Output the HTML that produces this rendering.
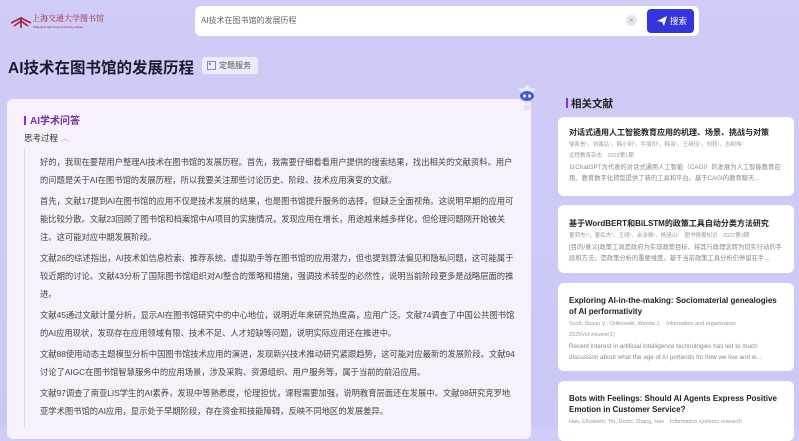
<!DOCTYPE html>
<html><head><meta charset="utf-8">
<style>
*{margin:0;padding:0;box-sizing:border-box}
body{width:799px;height:427px;overflow:hidden;background:linear-gradient(180deg,#cfcdf7 0%,#c9c7f5 100%);font-family:"Liberation Sans","Noto Sans CJK SC",sans-serif;position:relative;color:#333}
.abs{position:absolute}
.search{left:195px;top:6px;width:504px;height:30px;background:#fff;border-radius:6px}
.search .q{position:absolute;left:6px;top:9px;font-size:8px;color:#666}
.search .x{position:absolute;left:431px;top:9px;width:11px;height:11px;border-radius:50%;background:#e6e6ee;color:#999;font-size:8px;line-height:11px;text-align:center}
.btn{left:647px;top:9px;width:47px;height:24px;background:#3535e0;border-radius:4px;color:#fff;font-size:8.5px;line-height:24px;padding-left:23px}
h1{left:8px;top:56px;font-size:15.5px;font-weight:bold;color:#1a1a2e;white-space:nowrap}
.tag{left:202px;top:57px;width:56px;height:17px;background:#ececfc;border-radius:3px;font-size:8px;color:#555;line-height:17px;padding-left:17px}
.panel{left:7px;top:99px;width:524px;height:340px;background:#f8f1fb;border-radius:6px}
.pt{left:24px;top:112px;font-size:10px;font-weight:bold;color:#7030a0}
.pt:before{content:"";display:inline-block;width:2px;height:9px;background:#8a2be2;margin-right:4px;vertical-align:-1px}
.think{left:24px;top:132px;font-size:8.5px;color:#333}
.vl{left:24px;top:148px;width:1px;height:280px;background:#ddd}
.txt{left:40px;top:153px;width:476px;font-size:8.3px;line-height:18px;color:#444}
.txt p{margin-bottom:3px}
.rt{left:566px;top:96px;font-size:10.5px;font-weight:bold;color:#222}
.rt:before{content:"";display:inline-block;width:2px;height:10px;background:#8a2be2;margin-right:3px;vertical-align:-1px}
.card{left:558px;width:236px;background:#fff;border-radius:6px;padding:10px 11px}
.card .t{font-size:8px;font-weight:bold;color:#222;line-height:11px}
.card .m{font-size:5.5px;color:#999;line-height:11px;margin-top:2px;white-space:nowrap;overflow:hidden}
.card .a{font-size:6.3px;color:#888;line-height:11px}
</style></head><body>
<div class="abs" style="left:10px;top:13px;width:110px;height:20px">
<svg width="22" height="14" viewBox="0 0 22 14" style="position:absolute;left:0;top:2px"><path d="M1 8 L11 3 L21 8 M4 11 L11 6 L18 11 M11 2 V13" stroke="#a0203a" stroke-width="1.6" fill="none"/></svg>
<div style="position:absolute;left:22px;top:0;font-size:8px;color:#a0203a;font-family:'Noto Serif CJK SC',serif;white-space:nowrap">上海交通大学图书馆</div>
<div style="position:absolute;left:23px;top:12px;font-size:3px;color:#a0203a;white-space:nowrap">Shanghai Jiao Tong University Library</div>
</div>
<div class="abs search"><div class="q">AI技术在图书馆的发展历程</div><div class="x">×</div></div>
<div class="abs btn"><svg width="10" height="10" viewBox="0 0 10 10" style="position:absolute;left:10px;top:7px"><path d="M0 5 L10 0 L7 10 L5 6 Z" fill="#fff"/></svg>搜索</div>
<h1 class="abs">AI技术在图书馆的发展历程</h1>
<div class="abs tag"><svg width="9" height="9" viewBox="0 0 9 9" style="position:absolute;left:5px;top:4px"><rect x="0.5" y="0.5" width="8" height="8" fill="none" stroke="#7a8ac0"/><circle cx="3" cy="3" r="1.2" fill="#7a8ac0"/></svg>定题服务</div>
<div class="abs panel"></div>
<div class="abs pt">AI学术问答</div>
<div class="abs think">思考过程 <span style="color:#bbb">︿</span></div>
<div class="abs vl"></div>
<div class="abs txt">
<p>好的，我现在要帮用户整理AI技术在图书馆的发展历程。首先，我需要仔细看看用户提供的搜索结果，找出相关的文献资料。用户的问题是关于AI在图书馆的发展历程，所以我要关注那些讨论历史、阶段、技术应用演变的文献。</p>
<p>首先，文献17提到AI在图书馆的应用不仅是技术发展的结果，也是图书馆提升服务的选择，但缺乏全面视角。这说明早期的应用可能比较分散。文献23回顾了图书馆和档案馆中AI项目的实施情况，发现应用在增长，用途越来越多样化，但伦理问题刚开始被关注。这可能对应中期发展阶段。</p>
<p>文献26的综述指出，AI技术如信息检索、推荐系统、虚拟助手等在图书馆的应用潜力，但也提到算法偏见和隐私问题，这可能属于较近期的讨论。文献43分析了国际图书馆组织对AI整合的策略和措施，强调技术转型的必然性，说明当前阶段更多是战略层面的推进。</p>
<p>文献45通过文献计量分析，显示AI在图书馆研究中的中心地位，说明近年来研究热度高，应用广泛。文献74调查了中国公共图书馆的AI应用现状，发现存在应用领域有限、技术不足、人才短缺等问题，说明实际应用还在推进中。</p>
<p>文献88使用动态主题模型分析中国图书馆技术应用的演进，发现新兴技术推动研究紧跟趋势，这可能对应最新的发展阶段。文献94讨论了AIGC在图书馆智慧服务中的应用场景，涉及采购、资源组织、用户服务等，属于当前的前沿应用。</p>
<p>文献97调查了南亚LIS学生的AI素养，发现中等熟悉度，伦理担忧，课程需要加强，说明教育层面还在发展中。文献98研究克罗地亚学术图书馆的AI应用，显示处于早期阶段，存在资金和技能障碍，反映不同地区的发展差异。</p>
</div>
<svg class="abs" style="left:516px;top:83px" width="22" height="28" viewBox="0 0 22 28"><path d="M11 1 L14 5 L20 5 L17 10 L19 16 L11 20 L3 16 L5 10 L2 5 L8 5 Z" fill="#e8eaff" stroke="#c8cbee" stroke-width="0.5"/><ellipse cx="11" cy="13" rx="7" ry="5" fill="#4a5ad0"/><ellipse cx="8.5" cy="13" rx="1.3" ry="1.6" fill="#fff"/><ellipse cx="13.5" cy="13" rx="1.3" ry="1.6" fill="#fff"/><path d="M7 22 L15 22 L13 27 L9 27Z" fill="#dde0f8"/></svg>
<div class="abs rt">相关文献</div>
<div class="abs card" style="top:117px;height:79px">
<div class="t">对话式通用人工智能教育应用的机理、场景、挑战与对策</div>
<div class="m">徐凯贵¹，刘禹弘¹，韩小利¹，牛朋印¹，韩羽¹，王用佳¹，刘莉¹，吉树伟¹</div>
<div class="m" style="margin-top:0">远程教育杂志　2023第1期</div>
<div class="a">以ChatGPT为代表的对话式通用人工智能（CAGI）的发展为人工智能教育应用、教育数字化转型提供了新的工具和平台。基于CAGI的教育聊天...</div>
</div>
<div class="abs card" style="top:205px;height:68px;padding-top:13px">
<div class="t">基于WordBERT和BiLSTM的政策工具自动分类方法研究</div>
<div class="m">董莉杰¹²，董民杰¹，王翊¹，余泽雅¹，杨旭山¹　图书情报知识　2022第3期</div>
<div class="a">[目的/意义]政策工具是政府为实现政策目标、将其行政理念转为切实行动的手段和方法，是政策分析的重要维度。基于当前政策工具分析仍停留在手...</div>
</div>
<div class="abs card" style="top:283px;height:88px;padding-top:12px">
<div class="t">Exploring AI-in-the-making: Sociomaterial genealogies of AI performativity</div>
<div class="m">Scott, Susan V.; Orlikowski, Wanda J.　Information and organization</div>
<div class="m" style="margin-top:0">2025Vol.volume(1)</div>
<div class="a">Recent interest in artificial intelligence technologies has led to much discussion about what the age of AI portends for how we live and w...</div>
</div>
<div class="abs card" style="top:381px;height:60px;padding-top:12px">
<div class="t">Bots with Feelings: Should AI Agents Express Positive Emotion in Customer Service?</div>
<div class="m">Han, Elizabeth; Yin, Dezhi; Zhang, Han　Information systems research</div>
</div>
</body></html>
